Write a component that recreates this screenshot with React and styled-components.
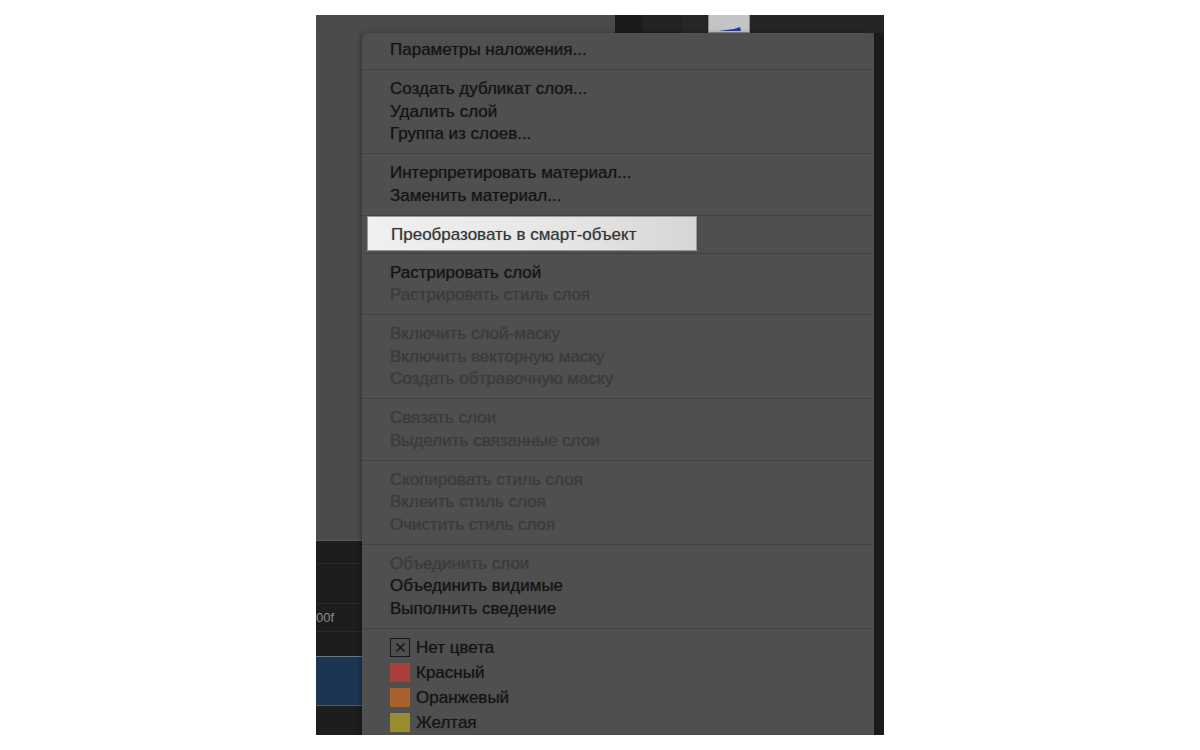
import React from "react";
import styled, { createGlobalStyle } from "styled-components";

const Global = createGlobalStyle`
  html, body { margin: 0; padding: 0; background: #ffffff; }
  body { font-family: "Liberation Sans", Arial, sans-serif; }
`;

const Page = styled.div`
  width: 1200px;
  height: 750px;
  padding: 15px 0 0 316px;
  box-sizing: border-box;
  background: #ffffff;
`;

const Frame = styled.div`
  position: relative;
  width: 568px;
  height: 720px;
  overflow: hidden;
  background: #4a4a4a;
  display: flex;
  flex-direction: column;
`;

const TopBand = styled.div`
  height: 18px;
  display: flex;
  flex: none;
`;

const TopGray = styled.div`
  width: 299px;
  background: #4a4a4a;
`;

const TopDark = styled.div`
  flex: 1;
  display: flex;
  background: #252525;
`;

const DarkCell = styled.div`
  width: ${(p) => p.$w}px;
  background: ${(p) => p.$bg};
`;

const Thumb = styled.div`
  width: 42px;
  background: #c4c4c6;
  border: 1px solid #8a8a8a;
  border-top: none;
  box-sizing: border-box;
  display: flex;
  align-items: flex-end;
  justify-content: center;
`;

const Body = styled.div`
  flex: 1;
  display: flex;
`;

const LeftCol = styled.div`
  width: 46px;
  display: flex;
  flex-direction: column;
`;

const LeftGray = styled.div`
  height: 507px;
  background: #4b4b4b;
  border-bottom: 1px solid #5a5a5a;
`;

const LayerRow = styled.div`
  height: ${(p) => p.$h}px;
  background: ${(p) => p.$bg || "#1d1d1d"};
  border-bottom: 1px solid ${(p) => p.$line || "#2a2a2a"};
  color: #8c8c8c;
  font-size: 13px;
  display: flex;
  align-items: center;
  overflow: hidden;
  white-space: nowrap;
`;

const Center = styled.div`
  flex: 1;
  background: #4a4a4a;
`;

const RightStrip = styled.div`
  width: 10px;
  background: #1b1b1b;
`;

const Menu = styled.div`
  position: absolute;
  left: 46px;
  top: 18px;
  width: 512px;
  height: 760px;
  background: #4f4f4f;
  border-radius: 6px 6px 0 0;
  box-shadow: -2px 0 4px rgba(0, 0, 0, 0.25);
  font-size: 17px;
  padding-top: 6px;
  box-sizing: border-box;
`;

const Group = styled.div`
  padding: ${(p) => (p.$tight ? "0 0 2px" : p.$colors ? "6px 0 7.5px" : "8px 0 7.5px")};
  border-bottom: 1px solid #424242;
  &:first-child {
    padding-top: 0;
  }
  &:last-child {
    border-bottom: none;
  }
`;

const Item = styled.div`
  height: ${(p) => (p.$tall ? 25 : 22.5)}px;
  line-height: ${(p) => (p.$tall ? 25 : 22.5)}px;
  padding-left: 28px;
  color: ${(p) => (p.$disabled ? "#3b3b3b" : "#141414")};
  text-shadow: ${(p) => (p.$disabled ? "0 0 1px rgba(59,59,59,0.6)" : "0 0 1px rgba(20,20,20,0.6)")};
  white-space: nowrap;
  display: flex;
  align-items: center;
  gap: 6px;
`;

const Highlight = styled.div`
  margin-left: 5px;
  width: 330px;
  height: 35px;
  box-sizing: border-box;
  padding: 3px 0 0 23px;
  display: flex;
  align-items: center;
  color: #363636;
  text-shadow: 0 0 1px rgba(54, 54, 54, 0.5);
  background: linear-gradient(90deg, #f0f0f0 0%, #e6e6e6 60%, #d6d6d6 100%);
  border: 1px solid #9a9a9a;
  white-space: nowrap;
`;

const Swatch = styled.span`
  width: 20px;
  height: 19px;
  box-sizing: border-box;
  background: ${(p) => p.$color || "transparent"};
  border: ${(p) => (p.$none ? "1.5px solid #161616" : "none")};
  display: inline-flex;
  align-items: center;
  justify-content: center;
  flex: none;
`;

const groups = [
  [{ t: "Параметры наложения..." }],
  [
    { t: "Создать дубликат слоя..." },
    { t: "Удалить слой" },
    { t: "Группа из слоев..." },
  ],
  [{ t: "Интерпретировать материал..." }, { t: "Заменить материал..." }],
  "highlight",
  [{ t: "Растрировать слой" }, { t: "Растрировать стиль слоя", d: true }],
  [
    { t: "Включить слой-маску", d: true },
    { t: "Включить векторную маску", d: true },
    { t: "Создать обтравочную маску", d: true },
  ],
  [
    { t: "Связать слои", d: true },
    { t: "Выделить связанные слои", d: true },
  ],
  [
    { t: "Скопировать стиль слоя", d: true },
    { t: "Вклеить стиль слоя", d: true },
    { t: "Очистить стиль слоя", d: true },
  ],
  [
    { t: "Объединить слои", d: true },
    { t: "Объединить видимые" },
    { t: "Выполнить сведение" },
  ],
];

const colors = [
  { t: "Нет цвета", none: true },
  { t: "Красный", c: "#ab3f3c" },
  { t: "Оранжевый", c: "#a9612e" },
  { t: "Желтая", c: "#978c2e" },
];

export default function App() {
  return (
    <>
      <Global />
      <Page>
        <Frame>
          <TopBand>
            <TopGray />
            <TopDark>
              <DarkCell $w={27} $bg="#1a1a1a" />
              <DarkCell $w={40} $bg="#222222" />
              <DarkCell $w={26} $bg="#262626" />
              <Thumb>
                <svg width="30" height="6" viewBox="0 0 30 6">
                  <path d="M4 5 C10 4 14 4 20 3 C23 2 25 1 26 1 L27 5 Z" fill="#2b3799" />
                </svg>
              </Thumb>
            </TopDark>
          </TopBand>
          <Body>
            <LeftCol>
              <LeftGray />
              <LayerRow $h={22} />
              <LayerRow $h={39} />
              <LayerRow $h={27}>00f</LayerRow>
              <LayerRow $h={24} $line="#6a7886" />
              <LayerRow $h={48} $bg="#1b3552" $line="#4f5d6a" />
              <LayerRow $h={40} />
            </LeftCol>
            <Center />
            <RightStrip />
          </Body>
          <Menu>
            {groups.map((g, i) =>
              g === "highlight" ? (
                <Group key={i} $tight>
                  <Highlight>Преобразовать в смарт-объект</Highlight>
                </Group>
              ) : (
                <Group key={i}>
                  {g.map((it) => (
                    <Item key={it.t} $disabled={it.d}>
                      {it.t}
                    </Item>
                  ))}
                </Group>
              )
            )}
            <Group $colors>
              {colors.map((c) => (
                <Item key={c.t} $tall>
                  <Swatch $color={c.c} $none={c.none}>
                    {c.none && (
                      <svg width="11" height="11" viewBox="0 0 11 11">
                        <path d="M1.5 1.5 L9.5 9.5 M9.5 1.5 L1.5 9.5" stroke="#161616" strokeWidth="1.6" />
                      </svg>
                    )}
                  </Swatch>
                  {c.t}
                </Item>
              ))}
            </Group>
          </Menu>
        </Frame>
      </Page>
    </>
  );
}
